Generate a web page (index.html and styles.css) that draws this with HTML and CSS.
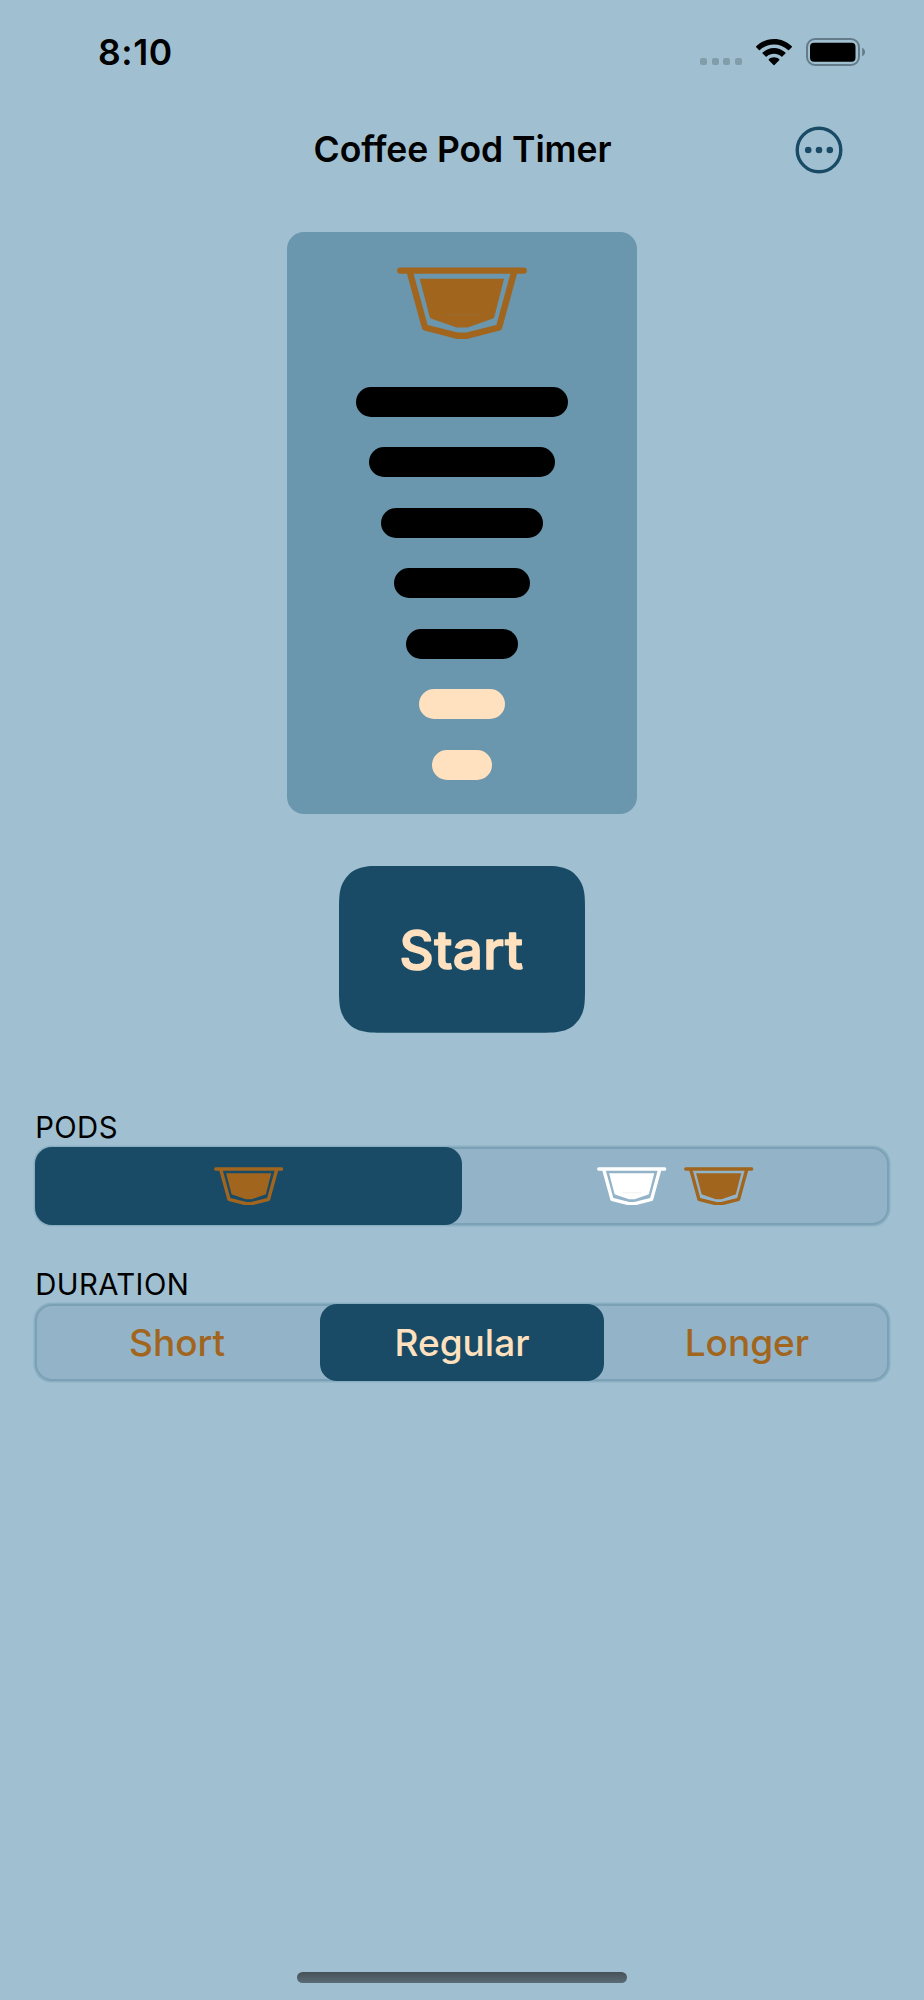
FILE: index.html
```html
<!DOCTYPE html>
<html lang="en">
<head>
<meta charset="UTF-8">
<meta name="viewport" content="width=device-width, initial-scale=1.0">
<title>Coffee Pod Timer</title>
<link rel="stylesheet" href="styles.css">
</head>
<body>
  <svg class="defs" aria-hidden="true">
    <symbol id="pod" viewBox="0 0 130 72">
      <path d="M3.3 3.6H126.7M12.8 5L28 60.5L60 68.7H70L102 60.5L117.2 5" fill="none" stroke="currentColor" stroke-width="6.4" stroke-linecap="round" stroke-linejoin="round"/>
      <path d="M22.7 11.7H107.1L97.3 50Q97 51 96 51.4L70.5 60.4H59.7L34 51.4Q33 51 32.7 50Z" fill="currentColor"/>
      <path class="pod-line" d="M48 48.2H83"/>
    </symbol>
  </svg>

  <div class="status-bar">
    <span class="time">8:10</span>
    <div class="status-icons">
      <div class="cell-dots"><i></i><i></i><i></i><i></i></div>
      <svg class="wifi" width="36" height="27" viewBox="0 0 36 27">
        <path d="M18 0C24.8 0 31.2 2.7 35.8 7.3Q36.2 7.8 35.8 8.3L33 11.1Q32.5 11.5 32 11C28.3 7.5 23.4 5.5 18 5.5S7.7 7.5 4 11Q3.5 11.5 3 11.1L.2 8.3Q-.2 7.8 .2 7.3C4.8 2.7 11.2 0 18 0Z"/>
        <path d="M18 9C22.3 9 26.3 10.7 29.4 13.6Q29.9 14.1 29.4 14.6L26.3 17.5Q25.8 18 25.3 17.5C23.3 15.7 20.8 14.7 18 14.7S12.7 15.7 10.7 17.5Q10.2 18 9.7 17.5L6.6 14.6Q6.1 14.1 6.6 13.6C9.7 10.7 13.7 9 18 9Z"/>
        <path d="M18 18.3C20 18.3 21.8 19 23.2 20.2Q23.7 20.7 23.2 21.2L18.5 26Q18 26.5 17.5 26L12.8 21.2Q12.3 20.7 12.8 20.2C14.2 19 16 18.3 18 18.3Z"/>
      </svg>
      <svg class="battery" width="60" height="28" viewBox="0 0 60 28">
        <rect x="1" y="1" width="52" height="26" rx="8" fill="none" stroke="#647c89" stroke-width="2"/>
        <rect x="4" y="4.7" width="45.5" height="19" rx="4"/>
        <path d="M56.2 9.7C60 11.5 60 16.5 56.2 18.3Z" fill="#647c89"/>
      </svg>
    </div>
  </div>

  <header class="nav">
    <h1>Coffee Pod Timer</h1>
    <svg class="more" width="48" height="48" viewBox="0 0 48 48">
      <circle cx="24" cy="24" r="21.8" fill="none" stroke="currentColor" stroke-width="3.4"/>
      <g fill="currentColor"><circle cx="13.2" cy="24" r="3.3"/><circle cx="24" cy="24" r="3.3"/><circle cx="34.8" cy="24" r="3.3"/></g>
    </svg>
  </header>

  <main>
    <div class="panel">
      <svg class="pod pod-big"><use href="#pod"/></svg>
      <div class="bars">
        <div class="bar" style="width:212px"></div>
        <div class="bar" style="width:186.8px"></div>
        <div class="bar" style="width:161.6px"></div>
        <div class="bar" style="width:136.4px"></div>
        <div class="bar" style="width:111.2px"></div>
        <div class="bar lit" style="width:86px"></div>
        <div class="bar lit" style="width:60.8px"></div>
      </div>
    </div>

    <button class="start">
      <svg width="246" height="167"><text x="122.3" y="102.5" text-anchor="middle" textLength="123.5">Start</text></svg>
    </button>

    <section>
      <h2 class="label-pods">PODS</h2>
      <div class="segmented">
        <div class="segment selected"><svg class="pod"><use href="#pod"/></svg></div>
        <div class="segment"><svg class="pod white"><use href="#pod"/></svg><svg class="pod"><use href="#pod"/></svg></div>
      </div>
    </section>

    <section>
      <h2 class="label-duration">DURATION</h2>
      <div class="segmented">
        <div class="segment">Short</div>
        <div class="segment selected">Regular</div>
        <div class="segment">Longer</div>
      </div>
    </section>
  </main>

  <div class="home-indicator"></div>
</body>
</html>
```
FILE: styles.css
```css
:root { --bg:#a0c0d2; --panel:#6a96ae; --dark:#194b66; --coffee:#a1651e; --cream:#ffe1bf; }
*{box-sizing:border-box;}
body{margin:0;height:2000px;background:var(--bg);color:#000;font-family:Inter,"Liberation Sans",sans-serif;display:flex;flex-direction:column;overflow:hidden;}
.defs{display:none;}

/* status bar */
.status-bar{height:104px;padding:0 58px 0 98px;display:flex;justify-content:space-between;align-items:center;}
.time{font-size:35.5px;font-weight:600;line-height:44px;letter-spacing:.6px;padding-top:2px;}
.status-icons{display:flex;align-items:center;}
.cell-dots{display:flex;gap:4.3px;margin:19px 14px 0 0;}
.cell-dots i{width:7.3px;height:7.3px;border-radius:2px;background:#829daa;}
.wifi{margin-right:14px;}

.nav{height:91px;display:grid;grid-template-columns:1fr auto 1fr;align-items:center;}
.nav h1{grid-column:2;margin:0;font-size:35.5px;font-weight:600;line-height:44px;letter-spacing:-.08px;padding-left:1px;}
.more{justify-self:end;margin-right:81.2px;color:var(--dark);}

main{flex:1;display:flex;flex-direction:column;align-items:center;padding:37.3px 34.7px 0;}

/* timer */
.panel{width:349.5px;height:581.5px;padding-top:34.5px;border-radius:17px;background:var(--panel);display:flex;flex-direction:column;align-items:center;}
.pod{display:block;width:69.5px;height:38.5px;color:var(--coffee);}
.pod.white{color:#fff;}
.pod-big{width:130px;height:72px;}
.pod-line{fill:none;stroke:#8a8a80;stroke-width:.6;opacity:.4;}
.bars{display:flex;flex-direction:column;align-items:center;gap:30.2px;margin-top:47.9px;}
.bar{height:30.3px;border-radius:15.2px;background:#000;}
.bar.lit{background:var(--cream);}

.start{width:246px;height:167px;margin-top:52px;padding:0;border:0;background:var(--dark);clip-path:path("M0 42C0 27 1 20 7 12C14 3 22 0 42 0H204C224 0 232 3 239 12C245 20 246 27 246 42V125C246 140 245 147 239 155C232 164 224 167 204 167H42C22 167 14 164 7 155C1 147 0 140 0 125Z");}
.start svg{display:block;}
.start text{font:500 53px Inter,sans-serif;fill:var(--cream);stroke:var(--cream);stroke-width:1.6;stroke-linejoin:round;}

/* pickers */
section{width:100%;}
section h2{margin:0 0 1px .5px;font-size:29.3px;font-weight:400;line-height:36px;letter-spacing:.4px;}
.label-pods{padding-top:77.3px;}
.label-duration{padding-top:41.9px;}
.segmented{display:flex;height:77.6px;border-radius:17px;background:#93b4c8;box-shadow:0 0 0 1.6px #8bafc2,inset 0 0 0 2px #7ba1b6;}
.segment{flex:1;display:flex;align-items:center;justify-content:center;gap:17.6px;font-size:37px;font-weight:500;color:var(--coffee);border-radius:17px;}
.segment.selected{background:var(--dark);color:var(--cream);}

.home-indicator{width:330px;height:11px;margin:0 auto 17px;border-radius:6px;background:linear-gradient(#465157,#5a6c76);}
```
